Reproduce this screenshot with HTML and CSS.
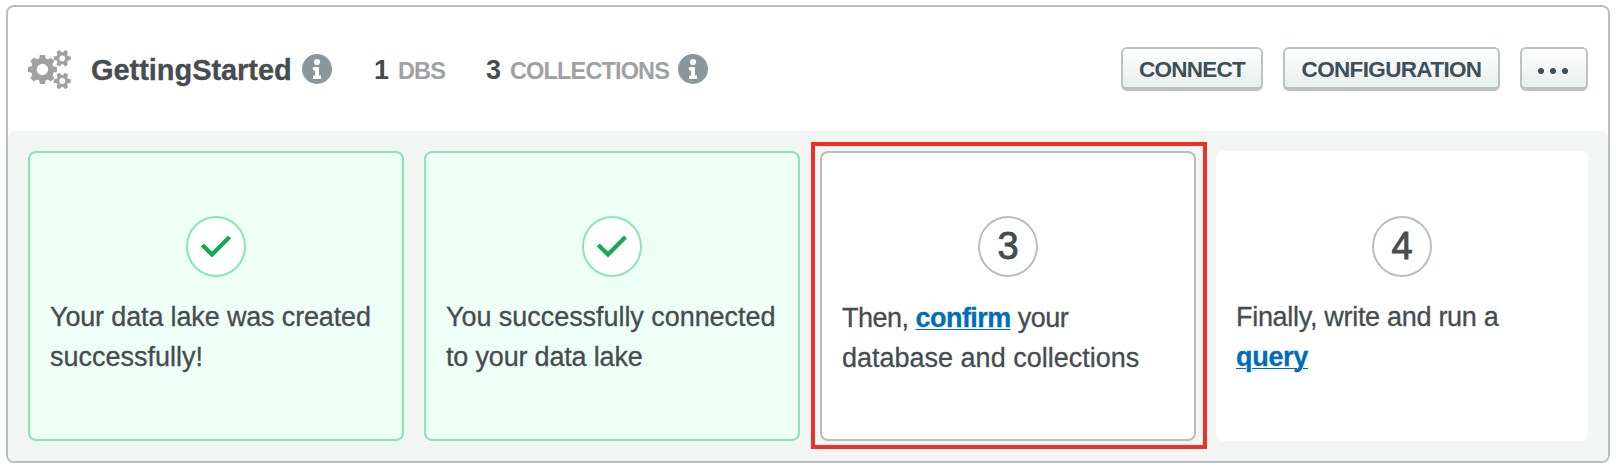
FILE: index.html
```html
<!DOCTYPE html>
<html lang="en">
<head>
<meta charset="utf-8">
<title>GettingStarted</title>
<link rel="stylesheet" href="styles.css">
</head>
<body>
<svg class="defs" width="0" height="0" aria-hidden="true">
  <defs>
    <mask id="hole-lg"><rect x="-16" y="-16" width="32" height="32" fill="#fff"/><circle r="5.7" fill="#000"/></mask>
    <mask id="hole-sm"><rect x="-10" y="-10" width="20" height="20" fill="#fff"/><circle r="2.9" fill="#000"/></mask>
    <path id="tooth-lg" d="M-3.3-10 L-2.6-14.5 H2.6 L3.3-10 V10 L2.6 14.5 H-2.6 L-3.3 10Z"/>
    <path id="tooth-sm" d="M-6-2.3 L-8.5-1.7 V1.7 L-6 2.3 H6 L8.5 1.7 V-1.7 L6-2.3Z"/>
    <g id="gear-sm" mask="url(#hole-sm)"><circle r="6"/><use href="#tooth-sm"/><use href="#tooth-sm" transform="rotate(60)"/><use href="#tooth-sm" transform="rotate(120)"/></g>
    <symbol id="info" viewBox="0 0 30 30">
      <circle cx="15" cy="15" r="15" fill="#89989b"/>
      <circle cx="15" cy="8" r="3.1" fill="#fff"/>
      <path d="M11 13 H17 V21.5 H19 V25 H11 V21.5 H13 V16.5 H11Z" fill="#fff"/>
    </symbol>
    <symbol id="check" viewBox="0 0 32 24">
      <path d="M2.3 10 L12 19.5 L29.5 2" fill="none" stroke="#13aa52" stroke-width="4.2"/>
    </symbol>
  </defs>
</svg>
<main class="panel">
  <header class="header">
    <svg class="gears" viewBox="0 0 44 40" fill="#9fa1a2">
      <g transform="translate(14.4 19.5)"><g mask="url(#hole-lg)"><circle r="11.4"/><use href="#tooth-lg"/><use href="#tooth-lg" transform="rotate(45)"/><use href="#tooth-lg" transform="rotate(90)"/><use href="#tooth-lg" transform="rotate(135)"/></g></g>
      <use href="#gear-sm" transform="translate(34.3 8.3)"/>
      <use href="#gear-sm" transform="translate(34.3 31)"/>
    </svg>
    <h1 class="title">GettingStarted</h1>
    <svg class="info"><use href="#info"/></svg>
    <div class="stat stat-dbs"><b class="count">1</b><span class="label">DBS</span></div>
    <div class="stat stat-collections"><b class="count">3</b><span class="label">COLLECTIONS</span></div>
    <svg class="info"><use href="#info"/></svg>
    <div class="actions">
      <button class="button connect">CONNECT</button>
      <button class="button configuration">CONFIGURATION</button>
      <button class="button more" aria-label="More"><i class="dot"></i><i class="dot"></i><i class="dot"></i></button>
    </div>
  </header>
  <section class="steps">
    <article class="step done">
      <div class="badge"><svg class="check"><use href="#check"/></svg></div>
      <p class="text"><span class="created">Your data lake was created</span><br><span class="success">successfully!</span></p>
    </article>
    <article class="step done">
      <div class="badge"><svg class="check"><use href="#check"/></svg></div>
      <p class="text"><span class="connected">You successfully connected</span><br><span class="lake">to your data lake</span></p>
    </article>
    <article class="step current">
      <div class="badge">3</div>
      <p class="text"><span class="then">Then, <a class="link">confirm</a> your</span><br><span class="database">database and collections</span></p>
    </article>
    <article class="step next">
      <div class="badge">4</div>
      <p class="text"><span class="finally">Finally, write and run a</span><br><a class="link">query</a></p>
    </article>
  </section>
</main>
</body>
</html>
```

FILE: styles.css
```css
* { box-sizing: border-box; }
body {
  margin: 0;
  padding: 5px 6px 7px;
  background: #fff;
  color: #464c4f;
  font-family: "Liberation Sans", Arial, sans-serif;
}
.defs { position: absolute; }
.panel {
  height: 458px;
  border: 2px solid #b8bebc;
  border-radius: 8px;
}
.header {
  display: flex;
  align-items: center;
  height: 124px;
  padding: 0 20px;
}
.gears { width: 44px; height: 40px; flex: none; margin-top: 1px; }
.title {
  width: 198px;
  margin: 2px 13px 0 19px;
  font-size: 29px;
  line-height: 34px;
  letter-spacing: -0.05px;
  white-space: nowrap;
  -webkit-text-stroke: 0.3px currentColor;
}
.info { width: 30px; height: 30px; flex: none; }
.stat {
  display: flex;
  align-items: baseline;
  white-space: nowrap;
  font-weight: bold;
  margin-top: 3px;
}
.stat-dbs { width: 112px; margin-left: 42px; }
.stat-collections { width: 192px; }
.count { width: 24px; font-size: 27px; }
.label { color: #a0a1a2; font-size: 23.5px; letter-spacing: -0.85px; }
.actions { display: flex; gap: 20px; margin: 0 0 0 auto; }
.button {
  display: flex;
  align-items: center;
  justify-content: center;
  height: 44px;
  padding: 3px 0 0;
  border: 2px solid #b8c4c2;
  border-bottom-width: 4px;
  border-radius: 6px;
  background: linear-gradient(#fff, #e7eeec);
  color: #3d4f58;
  font: bold 22.5px "Liberation Sans", Arial, sans-serif;
  letter-spacing: -0.75px;
}
.connect { width: 142px; }
.configuration { width: 217px; letter-spacing: -0.65px; }
.more { width: 68px; gap: 6px; padding: 5px 2px 0 0; }
.dot { width: 6px; height: 6px; border-radius: 50%; background: #3d4f58; }
.steps {
  display: flex;
  align-items: flex-start;
  gap: 20px;
  height: 330px;
  padding: 20px;
  border-radius: 8px 8px 6px 6px;
  background: #f3f5f4;
}
.step {
  width: 376px;
  height: 290px;
  padding: 63px 20px 0;
  border: 2px solid #b8bebc;
  border-radius: 8px;
  background: #fff;
}
.done { border-color: #89e5b3; background: #edfff7; }
.current { position: relative; }
/* Square highlight frame over the current step */
.current::after {
  content: "";
  position: absolute;
  inset: -11px -13px -10px -11px;
  border: 4px solid #ee3124;
}
.next { width: 372px; padding: 65px 20px 0; border: 0; }
.badge {
  display: flex;
  align-items: center;
  justify-content: center;
  width: 60px;
  height: 61px;
  margin: 0 auto;
  border: 2px solid #b8bebc;
  border-radius: 50%;
  background: #fff;
  font-size: 38px;
  -webkit-text-stroke: 0.9px #464c4f;
}
.done .badge { border-color: #89e5b3; }
.check { width: 32px; height: 24px; }
.text {
  margin: 20px 0 0;
  font-size: 27px;
  line-height: 40px;
  letter-spacing: -0.3px;
  white-space: nowrap;
  -webkit-text-stroke: 0.3px currentColor;
}
.current .text { margin-top: 21px; }
.created { letter-spacing: -0.15px; }
.success { letter-spacing: 0; }
.connected { letter-spacing: -0.05px; }
.lake { letter-spacing: -0.18px; }
.then { letter-spacing: -0.52px; }
.database { letter-spacing: 0; }
.link {
  color: #006cbc;
  font-weight: bold;
  text-decoration: underline;
  text-decoration-thickness: 1px;
  text-underline-offset: 2px;
}
```
